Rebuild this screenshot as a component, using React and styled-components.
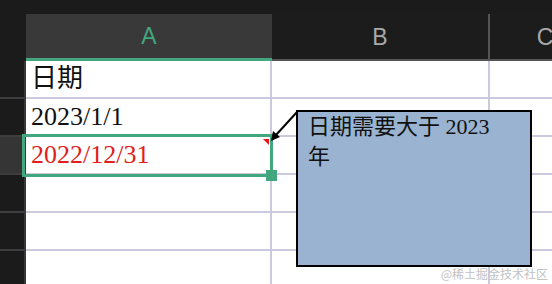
import React from 'react';
import styled, { createGlobalStyle } from 'styled-components';

const GlobalStyle = createGlobalStyle`
  html, body {
    margin: 0;
    padding: 0;
    background: #1b1b1b;
    overflow: hidden;
  }
  body {
    width: 552px;
    height: 284px;
  }
`

const GREEN = '#42a67f';
const GRID = '#cbc9de';

const Sheet = styled.div`
  position: relative;
  width: 552px;
  height: 284px;
  padding-top: 14px;
  box-sizing: border-box;
  overflow: hidden;
  font-family: "Liberation Serif", "Noto Sans CJK SC", serif;
`

const HeaderRow = styled.div`
  display: flex;
  height: 47px;
`

const Corner = styled.div`
  flex: 0 0 26px;
  background: #1b1b1b;
`

const ColHeader = styled.div`
  flex: 0 0 ${p => p.$w}px;
  box-sizing: border-box;
  display: flex;
  align-items: center;
  justify-content: center;
  padding-top: ${p => (p.$active ? 1 : 2)}px;
  font-family: "Liberation Sans", "Noto Sans", sans-serif;
  font-size: 23px;
  color: ${p => (p.$active ? GREEN : '#a9a9a9')};
  background: ${p => (p.$active ? '#393939' : '#1c1c1c')};
  border-bottom: ${p => (p.$active ? `3px solid ${GREEN}` : '2px solid #555')};
  border-right: ${p => (p.$sep ? '2px solid #555' : 'none')};
`

const Row = styled.div`
  display: flex;
  height: 38px;
`

const RowHeader = styled.div`
  flex: 0 0 24px;
  background: ${p => (p.$active ? '#353535' : '#1b1b1b')};
  border-right: 2px solid #383838;
  border-bottom: 2px solid #3e3e3e;
`

const Cell = styled.div`
  flex: 0 0 ${p => p.$w}px;
  box-sizing: border-box;
  background: #fff;
  border-right: 2px solid ${GRID};
  border-bottom: 2px solid ${GRID};
  display: flex;
  align-items: center;
  padding-left: 5px;
  font-size: 26px;
  line-height: 1;
  color: ${p => (p.$error ? '#e0201c' : '#111')};
  white-space: nowrap;
`

const Selection = styled.div`
  position: absolute;
  left: 22px;
  top: 134px;
  width: 251px;
  height: 43px;
  box-sizing: border-box;
  border: 3px solid ${GREEN};
  pointer-events: none;
`

const FillHandle = styled.div`
  position: absolute;
  left: 266px;
  top: 170px;
  width: 11px;
  height: 11px;
  background: ${GREEN};
`

const CommentMark = styled.div`
  position: absolute;
  left: 263px;
  top: 139px;
  width: 0;
  height: 0;
  border-top: 6px solid #e3141b;
  border-left: 6px solid transparent;
`

const Arrow = styled.svg`
  position: absolute;
  left: 0;
  top: 0;
  pointer-events: none;
`

const Comment = styled.div`
  position: absolute;
  left: 296px;
  top: 110px;
  width: 236px;
  height: 157px;
  box-sizing: border-box;
  border: 2px solid #000;
  background: #99b3d0;
  padding: 0 26px 0 10px;
  font-size: 22px;
  line-height: 30px;
  color: #111;
`

const Watermark = styled.div`
  position: absolute;
  right: 4px;
  bottom: 3px;
  font-family: "Noto Sans CJK SC", sans-serif;
  font-size: 12px;
  line-height: 14px;
  color: #c2c2c2;
`

const columns = [
  { key: 'A', w: 246 },
  { key: 'B', w: 218 },
  { key: 'C', w: 110 },
];

const rows = [
  { a: '日期' },
  { a: '2023/1/1' },
  { a: '2022/12/31', error: true, active: true },
  {},
  {},
  {},
];

export default function App() {
  return (
    <>
      <GlobalStyle />
      <Sheet>
        <HeaderRow>
          <Corner />
          {columns.map(c => (
            <ColHeader key={c.key} $w={c.w} $active={c.key === 'A'} $sep={c.key === 'B'}>
              {c.key}
            </ColHeader>
          ))}
        </HeaderRow>
        {rows.map((r, i) => (
          <Row key={i}>
            <RowHeader $active={r.active} />
            <Cell $w={246} $error={r.error}>{r.a}</Cell>
            <Cell $w={218} />
            <Cell $w={110} />
          </Row>
        ))}

        <Selection />
        <FillHandle />
        <CommentMark />
        <Arrow width="552" height="284">
          <line x1="297" y1="112" x2="276" y2="135" stroke="#000" strokeWidth="2" />
          <polygon points="271,141 273,131 280,137" fill="#000" />
        </Arrow>
        <Comment>日期需要大于 2023 年</Comment>
        <Watermark>@稀土掘金技术社区</Watermark>
      </Sheet>
    </>
  );
}
